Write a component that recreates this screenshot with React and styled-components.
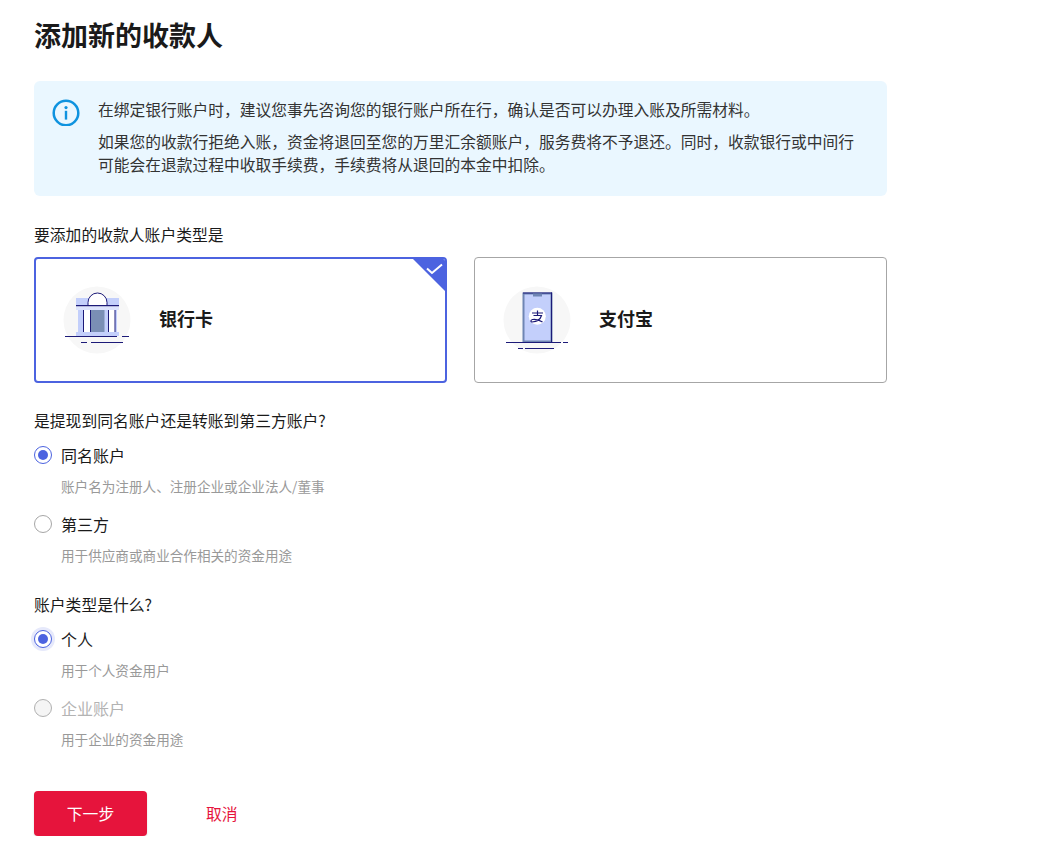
import React from "react";
import styled, { createGlobalStyle } from "styled-components";

const GlobalStyle = createGlobalStyle`
  body {
    margin: 0;
    background: #fff;
    color: #1a1a1a;
    font-family: "Noto Sans CJK SC", "Noto Sans", sans-serif;
  }
`;

const Page = styled.div`
  width: 853px;
  padding: 16px 0 0 34px;
`;

const Title = styled.h1`
  margin: 0 0 27px;
  font-size: 27px;
  line-height: 38px;
  font-weight: 700;
  color: #1a1a1a;
`;

const Alert = styled.div`
  display: flex;
  gap: 18px;
  height: 115px;
  box-sizing: border-box;
  padding: 17px 18px 0 18px;
  background: #eaf7ff;
  border-radius: 6px;
  margin-bottom: 27px;
`;

const AlertBody = styled.div`
  width: 765px;
  font-size: 15.75px;
  line-height: 23px;
  color: #333;
`;

const AlertLine = styled.p`
  margin: 0 0 9px;
`;

const Question = styled.div`
  font-size: 15.8px;
  line-height: 24px;
  color: #1a1a1a;
`;

const Cards = styled.div`
  display: grid;
  grid-template-columns: 1fr 1fr;
  gap: 27px;
  margin: 10px 0 26px;
`;

const Card = styled.div`
  position: relative;
  height: 126px;
  box-sizing: border-box;
  display: flex;
  align-items: center;
  gap: 28px;
  padding-left: ${({ $active }) => ($active ? "27px" : "28px")};
  border: ${({ $active }) => ($active ? "2px solid #4c63e0" : "1px solid #a6a6a6")};
  border-radius: 4px;
  overflow: hidden;
`;

const CardLabel = styled.span`
  margin-bottom: 5px;
  font-size: 18px;
  font-weight: 700;
  color: #1a1a1a;
`;

const Corner = styled.svg`
  position: absolute;
  top: -2px;
  right: -2px;
`;

const RadioRow = styled.div`
  display: flex;
  align-items: center;
  gap: 9px;
  height: 24px;
  margin-top: ${({ $first }) => ($first ? "10px" : "0")};
`;

const RadioCircle = styled.span`
  position: relative;
  flex: none;
  width: 18px;
  height: 18px;
  box-sizing: border-box;
  border-radius: 50%;
  background: ${({ $disabled }) => ($disabled ? "#f5f5f5" : "#fff")};
  border: 1px solid ${({ $checked, $disabled }) =>
    $checked ? "#4c63e0" : $disabled ? "#b0b0b0" : "#a6a6a6"};
  box-shadow: ${({ $focus }) => ($focus ? "0 0 0 3px #e6e9fb" : "none")};

  &::after {
    content: "";
    display: ${({ $checked }) => ($checked ? "block" : "none")};
    position: absolute;
    top: 3px;
    left: 3px;
    width: 10px;
    height: 10px;
    border-radius: 50%;
    background: #4c63e0;
  }
`;

const RadioLabel = styled.span`
  font-size: 16px;
  line-height: 24px;
  color: ${({ $disabled }) => ($disabled ? "#b3b3b3" : "#1a1a1a")};
`;

const RadioHint = styled.div`
  margin: 8px 0 ${({ $last }) => ($last ? "27px" : "15px")} 27px;
  font-size: 13.6px;
  line-height: 22px;
  color: #999;
`;

const Actions = styled.div`
  display: flex;
  align-items: center;
  margin-top: 41px;
`;

const NextButton = styled.button`
  width: 113px;
  height: 45px;
  border: 0;
  border-radius: 4px;
  background: #e6143c;
  box-shadow: 0 1px 2px rgba(0, 0, 0, 0.15);
  color: #fff;
  font: inherit;
  font-size: 15.8px;
`;

const CancelLink = styled.a`
  margin-left: 59px;
  font-size: 15.8px;
  color: #e6143c;
`;

const InfoIcon = () => (
  <svg width="28" height="28" viewBox="0 0 28 28" fill="none" style={{ flex: "none" }}>
    <circle cx="14" cy="15" r="12.3" stroke="#0f93df" strokeWidth="2.5" />
    <circle cx="14" cy="9.6" r="1.6" fill="#0f93df" />
    <rect x="12.8" y="12.8" width="2.4" height="8.8" fill="#0f93df" />
  </svg>
);

const BankArt = () => (
  <svg width="68" height="68" viewBox="0 0 68 68" fill="none">
    <circle cx="34" cy="34" r="33.5" fill="#f7f7f7" />
    <rect x="13" y="12" width="43" height="7" fill="#c3cffb" />
    <path d="M25 19v-2.5a9.5 9.5 0 0 1 19 0V19z" fill="#fff" />
    <path d="M25 19v-2.5a9.5 9.5 0 0 1 19 0V19" stroke="#1c1a78" strokeWidth="1" />
    <rect x="13" y="19" width="43" height="1.5" fill="#1c1a78" />
    <rect x="13" y="20.5" width="43" height="3.5" fill="#dde4fd" />
    <rect x="15" y="24" width="39" height="22" fill="#c3cffb" />
    <rect x="20" y="24" width="7" height="22" fill="#fff" />
    <rect x="45" y="24" width="7" height="22" fill="#fff" />
    <rect x="28" y="24" width="13.5" height="22" fill="#7a8fb5" />
    <path d="M20.5 24v22M27.5 24v22M45.5 24v22M52 24v22" stroke="#1c1a78" strokeWidth="1" />
    <rect x="13" y="46" width="43" height="4" fill="#c3cffb" />
    <path d="M2 50.5h52M59 50.5h7M18 56.5h6M28 56.5h32" stroke="#1c1a78" strokeWidth="1" />
  </svg>
);

const PhoneArt = () => (
  <svg width="68" height="68" viewBox="0 0 68 68" fill="none">
    <circle cx="34" cy="34" r="33.5" fill="#f7f7f7" />
    <rect x="20.5" y="7.5" width="28" height="48" fill="#c3cffb" stroke="#6f85b3" strokeWidth="2" />
    <path d="M48.5 6.5V56" stroke="#1c1a78" strokeWidth="1" />
    <path d="M20 7h29" stroke="#1c1a78" strokeWidth="1" />
    <rect x="30" y="7.5" width="9" height="3" fill="#6f85b3" />
    <circle cx="34.3" cy="30.3" r="8.5" fill="#fff" />
    <path
      d="M29 27h11M34.5 24.5V29M30.5 29.5h8c-1 3.5-4 6-9.5 6.5-1.5 0-1.5-2 .5-2.5 3-.5 7 .5 10 2.5"
      stroke="#1c1a78"
      strokeWidth="1.2"
    />
    <path d="M3 56.5h55M60 56.5h5M15 62.5h5M22 62.5h29" stroke="#1c1a78" strokeWidth="1" />
  </svg>
);

const Radio = ({ label, hint, checked, disabled, focus, first, last }) => (
  <>
    <RadioRow $first={first}>
      <RadioCircle $checked={checked} $disabled={disabled} $focus={focus} />
      <RadioLabel $disabled={disabled}>{label}</RadioLabel>
    </RadioRow>
    <RadioHint $last={last}>{hint}</RadioHint>
  </>
);

export default function App() {
  return (
    <Page>
      <GlobalStyle />
      <Title>添加新的收款人</Title>
      <Alert>
        <InfoIcon />
        <AlertBody>
          <AlertLine>在绑定银行账户时，建议您事先咨询您的银行账户所在行，确认是否可以办理入账及所需材料。</AlertLine>
          <AlertLine>
            如果您的收款行拒绝入账，资金将退回至您的万里汇余额账户，服务费将不予退还。同时，收款银行或中间行可能会在退款过程中收取手续费，手续费将从退回的本金中扣除。
          </AlertLine>
        </AlertBody>
      </Alert>
      <Question>要添加的收款人账户类型是</Question>
      <Cards>
        <Card $active>
          <BankArt />
          <CardLabel>银行卡</CardLabel>
          <Corner width="36" height="36" viewBox="0 0 36 36">
            <path d="M0 0h32a4 4 0 0 1 4 4v32z" fill="#4c63e0" />
            <path d="M16 11.5l5 4.5 10-8.5" fill="none" stroke="#fff" strokeWidth="2" />
          </Corner>
        </Card>
        <Card>
          <PhoneArt />
          <CardLabel>支付宝</CardLabel>
        </Card>
      </Cards>
      <Question>是提现到同名账户还是转账到第三方账户?</Question>
      <Radio first checked label="同名账户" hint="账户名为注册人、注册企业或企业法人/董事" />
      <Radio label="第三方" hint="用于供应商或商业合作相关的资金用途" last />
      <Question>账户类型是什么?</Question>
      <Radio first checked focus label="个人" hint="用于个人资金用户" />
      <Radio disabled label="企业账户" hint="用于企业的资金用途" />
      <Actions>
        <NextButton>下一步</NextButton>
        <CancelLink>取消</CancelLink>
      </Actions>
    </Page>
  );
}
